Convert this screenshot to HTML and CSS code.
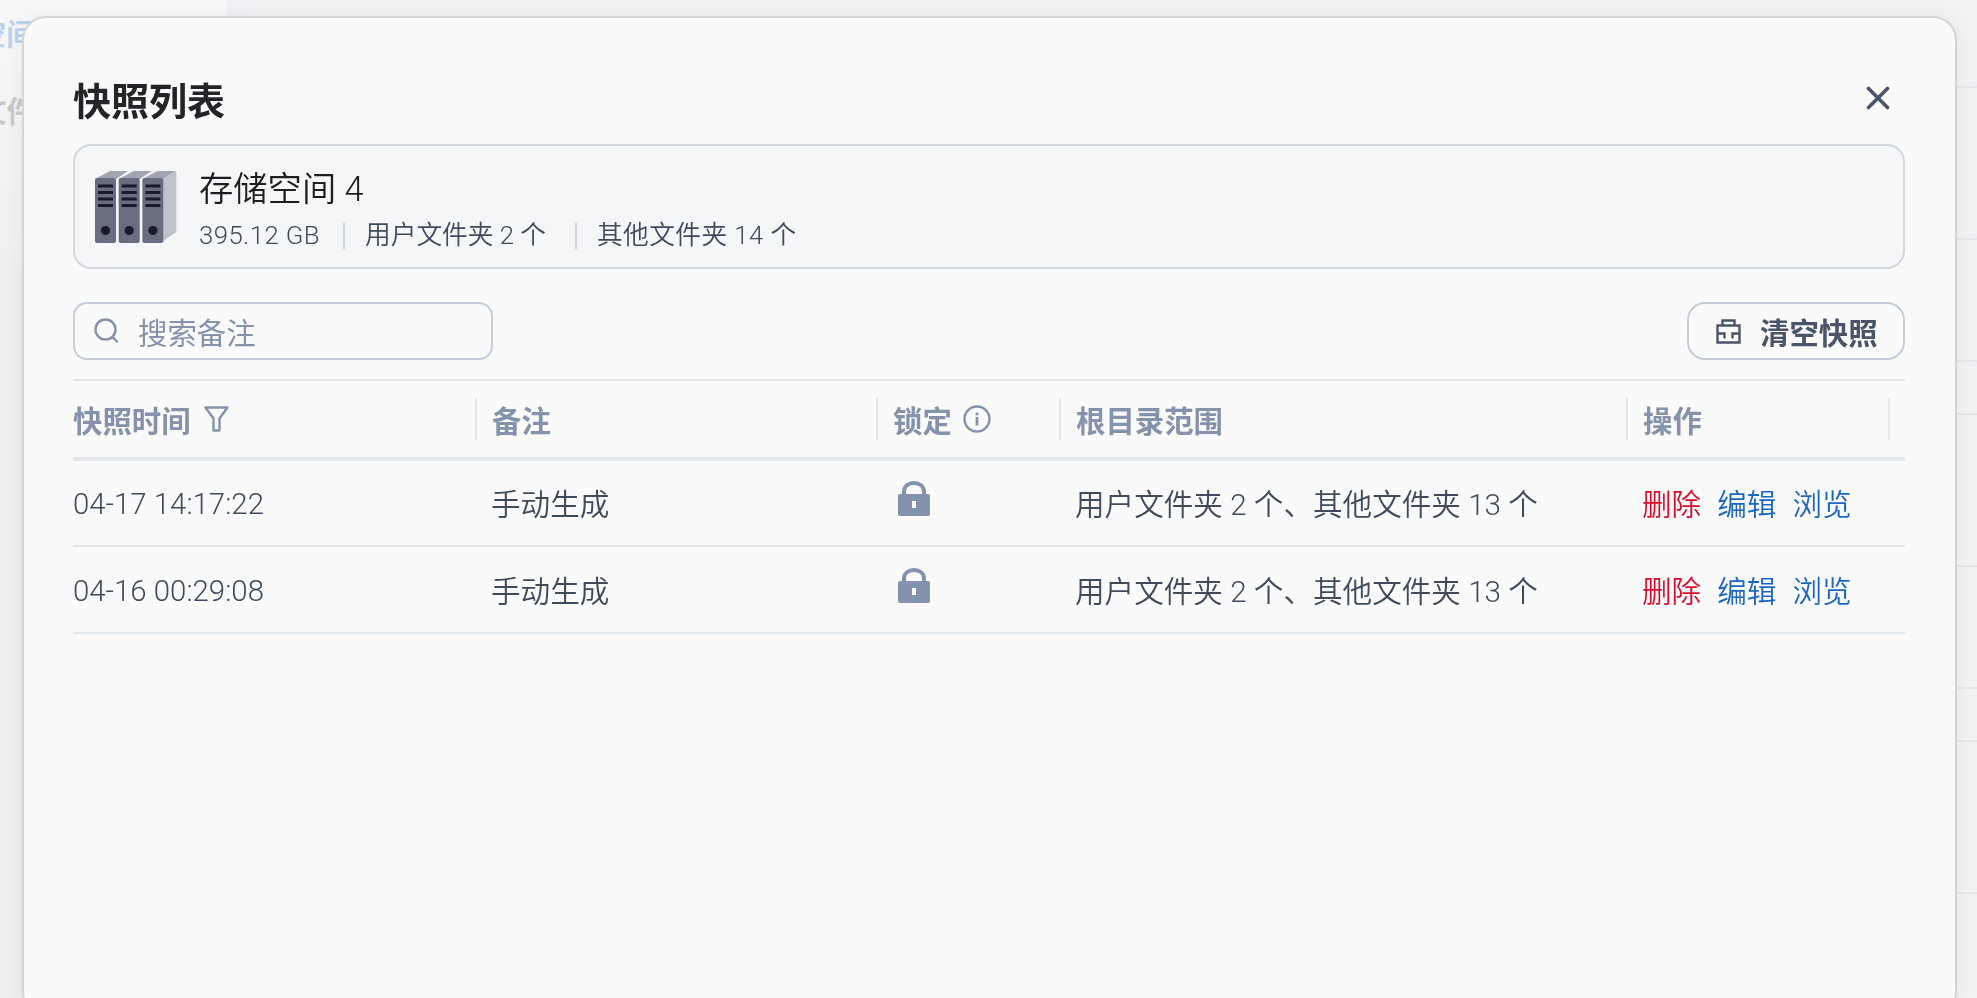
FILE: index.html
```html
<!DOCTYPE html>
<html lang="zh-CN">
<head>
<meta charset="utf-8">
<title>快照列表</title>
<link rel="stylesheet" href="styles.css">
</head>
<body>
<div class="backdrop">
  <aside class="side">
    <div class="side-item side-active">存储空间</div>
    <div class="side-item side-files">文件</div>
  </aside>
  <main class="back-main">
    <div class="back-row back-r1"></div>
    <div class="back-row back-r2"></div>
    <div class="back-row back-r3"></div>
    <div class="back-row back-r4"></div>
    <div class="back-row back-r2"></div>
    <div class="back-row back-r3"></div>
    <div class="back-row back-r4"></div>
    <div class="back-row back-r2"></div>
  </main>
</div>
<section class="modal">
  <header class="modal-head">
    <h1 class="modal-title">快照列表</h1>
    <svg class="close" width="24" height="24" viewBox="0 0 24 24"><path d="M2.5 2.5 21.500 21.500M21.500 2.500 2.500 21.500" fill="none" stroke="#4a5568" stroke-width="3.6" stroke-linecap="round"/></svg>
  </header>
  <div class="info">
    <svg class="info-icon" width="82" height="73" viewBox="0 0 82 73">
      <g>
        <path d="M0 9 15 1H33L21 9Z" fill="#a2a5b1"/>
        <rect x="0" y="8" width="21" height="65" rx="2" fill="#696d80"/>
        <path d="M3 16H18M3 22.500H18M3 29H18M3 35.500H18" stroke="#191b2c" stroke-width="3"/>
        <circle cx="10.500" cy="60.500" r="4.600" fill="#191b2c"/>
      </g>
      <g transform="translate(23.700 0)">
        <path d="M0 9 15 1H33L21 9Z" fill="#a2a5b1"/>
        <rect x="0" y="8" width="21" height="65" rx="2" fill="#696d80"/>
        <path d="M3 16H18M3 22.500H18M3 29H18M3 35.500H18" stroke="#191b2c" stroke-width="3"/>
        <circle cx="10.500" cy="60.500" r="4.600" fill="#191b2c"/>
      </g>
      <g transform="translate(47.400 0)">
        <path d="M0 9 15 1H33L21 9Z" fill="#a2a5b1"/>
        <path d="M21 9 33 1 34 2V62L21 71Z" fill="#bfc3cc"/>
        <rect x="0" y="8" width="21" height="65" rx="2" fill="#696d80"/>
        <path d="M3 16H18M3 22.500H18M3 29H18M3 35.500H18" stroke="#191b2c" stroke-width="3"/>
        <circle cx="10.500" cy="60.500" r="4.600" fill="#191b2c"/>
      </g>
    </svg>
    <div class="info-text">
      <div class="info-name">存储空间 4</div>
      <div class="info-sub">
        <span class="sub-item sub-wide">395.12 GB</span>
        <span class="sub-item sub-sep">用户文件夹 2 个</span>
        <span class="sub-item sub-sep sub-wide">其他文件夹 14 个</span>
      </div>
    </div>
  </div>
  <div class="toolbar">
    <div class="search">
      <svg class="search-icon" width="28" height="28" viewBox="0 0 28 28"><circle cx="12.500" cy="12.500" r="10" fill="none" stroke="#8493ab" stroke-width="2.400"/><path d="M20 20.500 24 24.500" stroke="#8493ab" stroke-width="2.400" stroke-linecap="round"/></svg>
      <span class="search-ph">搜索备注</span>
    </div>
    <div class="clear-btn">
      <svg width="25" height="25" viewBox="0 0 25 25"><path d="M1.500 6.500H23.500V23.500H1.500ZM6.500 6.500V1.500H18.500V6.500M1.500 14.500H8.500V19.500M23.500 14.500H16.500V19.500" fill="none" stroke="#4a5568" stroke-width="2.400"/></svg>
      <span>清空快照</span>
    </div>
  </div>
  <div class="table">
    <div class="thead">
      <div class="th th-first"><span>快照时间</span>
        <svg width="25" height="26" viewBox="0 0 25 26"><path d="M1.500 1.500H23.500L15.500 12.500V24.500H9.500V12.500Z" fill="none" stroke="#8493ab" stroke-width="2.400" stroke-linejoin="round"/></svg>
      </div>
      <div class="th">备注</div>
      <div class="th"><span>锁定</span>
        <svg class="th-info" width="28" height="28" viewBox="0 0 28 28"><circle cx="14" cy="14" r="12.500" fill="none" stroke="#8493ab" stroke-width="2.400"/><rect x="12.600" y="12" width="2.800" height="8.500" fill="#8493ab"/><rect x="12.600" y="7.500" width="2.800" height="2.800" fill="#8493ab"/></svg>
      </div>
      <div class="th">根目录范围</div>
      <div class="th">操作</div>
      <div class="th th-gutter"></div>
    </div>
    <div class="tr">
      <div class="td td-first">04-17 14:17:22</div>
      <div class="td">手动生成</div>
      <div class="td td-lock">
        <svg width="32" height="35" viewBox="0 0 32 35"><path d="M6 14V11C6 5 10.500 2 16 2S26 5 26 11V14" fill="none" stroke="#8493ab" stroke-width="4"/><path fill-rule="evenodd" d="M2 13H30Q32 13 32 15V33Q32 35 30 35H2Q0 35 0 33V15Q0 13 2 13ZM14 20V27H18V20Z" fill="#8493ab"/></svg>
      </div>
      <div class="td">用户文件夹 2 个、其他文件夹 13 个</div>
      <div class="td td-ops"><span class="op-del">删除</span><span class="op-link">编辑</span><span class="op-link">浏览</span></div>
    </div>
    <div class="tr">
      <div class="td td-first">04-16 00:29:08</div>
      <div class="td">手动生成</div>
      <div class="td td-lock">
        <svg width="32" height="35" viewBox="0 0 32 35"><path d="M6 14V11C6 5 10.500 2 16 2S26 5 26 11V14" fill="none" stroke="#8493ab" stroke-width="4"/><path fill-rule="evenodd" d="M2 13H30Q32 13 32 15V33Q32 35 30 35H2Q0 35 0 33V15Q0 13 2 13ZM14 20V27H18V20Z" fill="#8493ab"/></svg>
      </div>
      <div class="td">用户文件夹 2 个、其他文件夹 13 个</div>
      <div class="td td-ops"><span class="op-del">删除</span><span class="op-link">编辑</span><span class="op-link">浏览</span></div>
    </div>
  </div>
</section>
</body>
</html>
```
FILE: styles.css
```css
* { box-sizing: border-box; }
html, body { margin: 0; height: 100%; overflow: hidden; }
body {
  font-family: Roboto, "Noto Sans CJK SC", sans-serif;
  background: #f1f2f3;
  color: #4a5568;
}
.backdrop { display: flex; height: 998px; }
.side {
  width: 245px;
  background: linear-gradient(#f7f7f8, #eceef0 30%);
  border-right: 18px solid #eff1f4;
  padding-top: 15px;
  overflow: hidden;
}
.side-item { font-size: 29.4px; font-weight: 700; margin-left: -82px; height: 77px; line-height: 40px; color: #c9c9cb; white-space: nowrap; }
.side-active { color: #bdd2ec; }
.side-files { margin-left: -23px; }
.back-main { flex: 1; }
.back-row { border-bottom: 2px solid #e5e7ea; }
.back-r1 { height: 88px; }
.back-r2 { height: 152px; }
.back-r3 { height: 122px; }
.back-r4 { height: 53px; }

.modal {
  position: fixed;
  left: 22px;
  top: 16px;
  width: 1935px;
  height: 1000px;
  background: #fafafa;
  border: 2px solid #d3d4d6;
  border-radius: 24px;
  padding: 0 50px 0 49px;
  box-shadow: 0 0 20px rgba(0, 0, 0, 0.05);
}
.modal-head { display: flex; justify-content: space-between; align-items: flex-start; height: 126px; padding-top: 59px; }
.modal-title { margin: 0; font-size: 38px; line-height: 50px; font-weight: 700; color: #222427; }
.close { margin: 9px 15px 0 0; }
.info {
  display: flex;
  align-items: center;
  height: 125px;
  background: #f5f6f8;
  border: 2px solid #d3d8de;
  border-radius: 18px;
  padding: 0 0 0 20px;
  gap: 22px;
}
.info-text { display: flex; flex-direction: column; padding-top: 6px; }
.info-name { font-size: 34.3px; line-height: 46px; color: #1c1e22; font-weight: 350; }
.info-sub { display: flex; font-size: 25.7px; line-height: 36px; margin-top: 5px; color: #3f4a5c; font-weight: 350; }
.sub-item { padding-right: 23px; white-space: nowrap; }
.sub-wide { letter-spacing: 0.45px; }
.sub-sep { position: relative; padding-left: 22px; }
.sub-sep::before { content: ""; position: absolute; left: 0; top: 6px; bottom: 4px; width: 2px; background: #cbd3dc; }
.sub-sep + .sub-sep { margin-left: 6px; }
.toolbar { display: flex; justify-content: space-between; height: 58px; margin-top: 33px; }
.search {
  display: flex;
  align-items: center;
  width: 420px;
  border: 2px solid #c5ced9;
  border-radius: 14px;
  padding-left: 18px;
  gap: 17px;
}
.search-ph { font-size: 29.4px; color: #8493ab; }
.clear-btn {
  display: flex;
  align-items: center;
  width: 218px;
  border: 2px solid #c5ced9;
  border-radius: 18px;
  padding-left: 27px;
  gap: 19px;
  font-size: 29.4px;
  font-weight: 700;
  color: #4a5568;
}
.table { margin-top: 19px; }
.thead, .tr { display: grid; grid-template-columns: 402px 401px 183px 567px 262px 17px; }
.thead { height: 82px; margin-bottom: -1px; border-top: 2px solid #e2e7ec; border-bottom: 4px solid #e2e7ec; align-items: center; }
.th {
  display: flex;
  align-items: center;
  gap: 13px;
  height: 42px;
  padding-left: 15px;
  border-left: 2px solid #e2e7ec;
  font-size: 29.4px;
  font-weight: 700;
  color: #8493ab;
}
.th-first { padding-left: 0; border-left: 0; }
.th-gutter { padding: 0; }
.th-info { margin-left: -2px; }
.tr { height: 87px; border-bottom: 2px solid #e2e7ec; align-items: center; }
.td { padding-left: 16px; padding-bottom: 1px; font-size: 29.6px; font-weight: 350; color: #3f4a5c; white-space: nowrap; }
.td-first { padding-left: 0; padding-bottom: 0; padding-top: 2px; font-size: 29.4px; }
.td-lock { padding-left: 22px; padding-bottom: 0; align-self: start; padding-top: 21px; display: flex; }
.td-ops { display: flex; gap: 16px; }
.op-del { color: #d90a2a; }
.op-link { color: #1d66c0; }
```
